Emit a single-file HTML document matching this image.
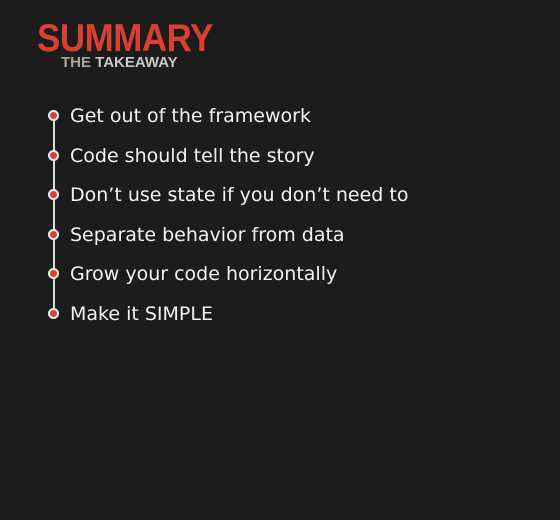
<!DOCTYPE html>
<html><head><style>
body{margin:0;width:560px;height:520px;background:#1c1c1c;overflow:hidden;position:relative;font-family:"Liberation Sans",sans-serif}
.t{position:absolute;left:37px;top:17px;color:#d9402f;font-weight:bold;font-size:39px;letter-spacing:-0.5px;transform:scaleX(0.895);transform-origin:left}
.s{position:absolute;left:61px;top:54px;color:#a8a8a8;font-weight:bold;font-size:15px}
.s b{color:#c8c8c8}
.line{position:absolute;left:53px;top:115px;width:2px;height:198px;background:#ddd}
.d{position:absolute;left:48px;width:7px;height:7px;border-radius:50%;background:#d9402f;border:2px solid #eee}
.i{position:absolute;left:70px;color:#f2f2f2;font-family:"DejaVu Sans",sans-serif;font-size:19px;line-height:20px}
</style></head><body>
<div class="t">SUMMARY</div>
<div class="s">THE <b>TAKEAWAY</b></div>
<div class="line"></div>
<div class="d" style="top:110px"></div><div class="i" style="top:106px">Get out of the framework</div>
<div class="d" style="top:150px"></div><div class="i" style="top:146px">Code should tell the story</div>
<div class="d" style="top:189px"></div><div class="i" style="top:185px">Don’t use state if you don’t need to</div>
<div class="d" style="top:229px"></div><div class="i" style="top:225px">Separate behavior from data</div>
<div class="d" style="top:268px"></div><div class="i" style="top:264px">Grow your code horizontally</div>
<div class="d" style="top:308px"></div><div class="i" style="top:304px">Make it SIMPLE</div>
</body></html>
